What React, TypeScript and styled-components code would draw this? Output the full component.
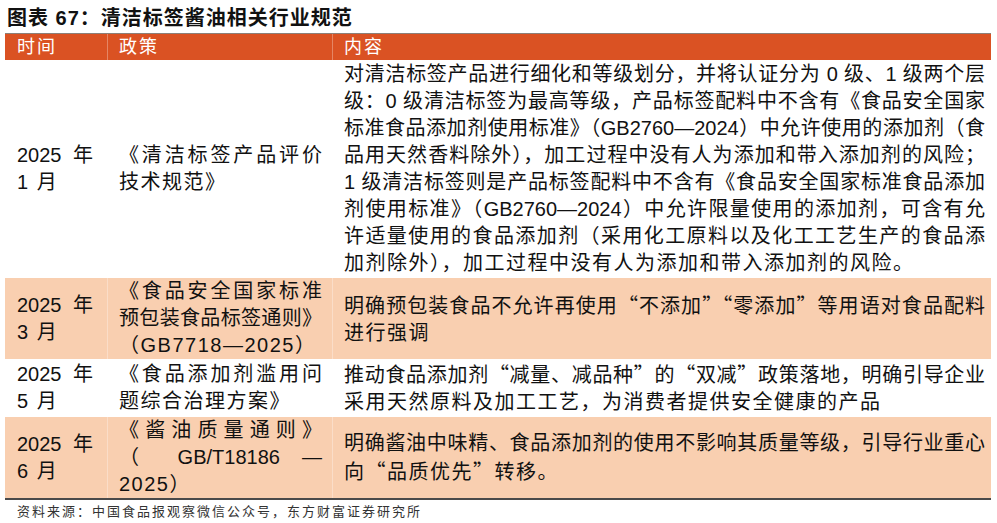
import React from 'react';
import styled, { createGlobalStyle } from 'styled-components';

const GlobalStyle = createGlobalStyle`
  html, body {
    margin: 0;
    padding: 0;
    background: #fff;
  }
  body {
    font-family: 'Liberation Sans', 'Noto Sans CJK SC', sans-serif;
    color: #111;
  }
`;

const Page = styled.div`
  width: 997px;
  height: 523px;
  box-sizing: border-box;
  padding: 4px 6px 0 5px;
  overflow: hidden;
`;

const Title = styled.div`
  font-size: 20px;
  font-weight: 700;
  line-height: 28px;
  letter-spacing: 1px;
  padding-left: 2px;
  margin-bottom: 1px;
  color: #111;
`;

const Table = styled.div`
  border-top: 1px solid #8c7f78;
  border-bottom: 2px solid #4a4a4a;
`;

const Row = styled.div<{ $shade?: 'head' | 'light' | 'none' }>`
  display: grid;
  grid-template-columns: 102px 225px 1fr;
  background: ${(p) =>
    p.$shade === 'head' ? '#da5223' : p.$shade === 'light' ? '#f9cfb0' : '#fff'};
  color: ${(p) => (p.$shade === 'head' ? '#fff' : '#111')};
`;

const Cell = styled.div<{ $col: number; $head?: boolean }>`
  display: flex;
  flex-direction: column;
  justify-content: center;
  box-sizing: border-box;
  padding: ${(p) =>
    p.$head
      ? p.$col === 0
        ? '1px 14px 1px 12px'
        : '1px 6px 1px 11px'
      : p.$col === 0
      ? '0 14px 0 12px'
      : p.$col === 1
      ? '0 10px 0 11px'
      : '1px 6px 1px 11px'};
  border-left: ${(p) => (p.$col === 0 ? 'none' : '1px solid rgba(255, 255, 255, 0.3)')};
  font-size: ${(p) => (p.$head ? '18px' : '20px')};
  line-height: ${(p) => (p.$head ? '24px' : '27px')};
  letter-spacing: ${(p) => (p.$head ? '2px' : '0')};
`;

const Line = styled.span<{ $last?: boolean }>`
  display: block;
  text-align: ${(p) => (p.$last ? 'left' : 'justify')};
  text-align-last: ${(p) => (p.$last ? 'left' : 'justify')};
  letter-spacing: ${(p) => (p.$last ? '1.5px' : '0')};
`;

const Quote = styled.span`
  font-family: 'Noto Sans CJK SC', sans-serif;
`;

const Source = styled.div`
  font-family: 'Noto Sans CJK SC', sans-serif;
  font-size: 13px;
  line-height: 18px;
  letter-spacing: 2px;
  color: #333;
  padding: 2px 0 0 12px;
`;

interface PolicyRow {
  date: string[];
  policy: string[];
  content: string[];
  shade: 'light' | 'none';
}

const rows: PolicyRow[] = [
  {
    date: ['2025 年', '1 月'],
    policy: ['《清洁标签产品评价', '技术规范》'],
    content: [
      '对清洁标签产品进行细化和等级划分，并将认证分为 0 级、1 级两个层',
      '级：0 级清洁标签为最高等级，产品标签配料中不含有《食品安全国家',
      '标准食品添加剂使用标准》（GB2760—2024）中允许使用的添加剂（食',
      '品用天然香料除外），加工过程中没有人为添加和带入添加剂的风险；',
      '1 级清洁标签则是产品标签配料中不含有《食品安全国家标准食品添加',
      '剂使用标准》（GB2760—2024）中允许限量使用的添加剂，可含有允',
      '许适量使用的食品添加剂（采用化工原料以及化工工艺生产的食品添',
      '加剂除外），加工过程中没有人为添加和带入添加剂的风险。',
    ],
    shade: 'none',
  },
  {
    date: ['2025 年', '3 月'],
    policy: ['《食品安全国家标准', '预包装食品标签通则》', '（GB7718—2025）'],
    content: ['明确预包装食品不允许再使用“不添加”“零添加”等用语对食品配料', '进行强调'],
    shade: 'light',
  },
  {
    date: ['2025 年', '5 月'],
    policy: ['《食品添加剂滥用问', '题综合治理方案》'],
    content: [
      '推动食品添加剂“减量、减品种”的“双减”政策落地，明确引导企业',
      '采用天然原料及加工工艺，为消费者提供安全健康的产品',
    ],
    shade: 'none',
  },
  {
    date: ['2025 年', '6 月'],
    policy: ['《酱油质量通则》', '（ GB/T18186 —', '2025）'],
    content: ['明确酱油中味精、食品添加剂的使用不影响其质量等级，引导行业重心', '向“品质优先”转移。'],
    shade: 'light',
  },
];

const withQuotes = (text: string) =>
  text.split(/([“”])/).map((part, i) =>
    part === '“' || part === '”' ? <Quote key={i}>{part}</Quote> : part
  );

const Lines: React.FC<{ lines: string[] }> = ({ lines }) => (
  <>
    {lines.map((l, i) => (
      <Line key={i} $last={i === lines.length - 1}>
        {withQuotes(l)}
      </Line>
    ))}
  </>
);

const App: React.FC = () => (
  <Page>
    <GlobalStyle />
    <Title>图表 67：清洁标签酱油相关行业规范</Title>
    <Table>
      <Row $shade="head">
        <Cell $col={0} $head>时间</Cell>
        <Cell $col={1} $head>政策</Cell>
        <Cell $col={2} $head>内容</Cell>
      </Row>
      {rows.map((r, i) => (
        <Row key={i} $shade={r.shade}>
          <Cell $col={0}>
            <Lines lines={r.date} />
          </Cell>
          <Cell $col={1}>
            <Lines lines={r.policy} />
          </Cell>
          <Cell $col={2}>
            <Lines lines={r.content} />
          </Cell>
        </Row>
      ))}
    </Table>
    <Source>资料来源：中国食品报观察微信公众号，东方财富证券研究所</Source>
  </Page>
);

export default App;
